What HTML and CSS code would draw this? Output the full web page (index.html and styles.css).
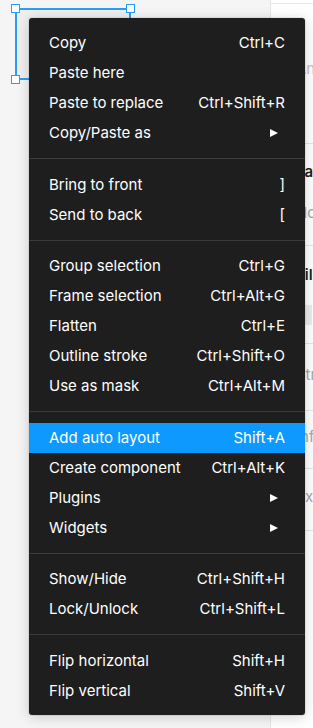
FILE: index.html
```html
<!DOCTYPE html>
<html lang="en">
<head>
    <meta charset="UTF-8">
    <meta name="viewport" content="width=device-width, initial-scale=1.0">
    <title>Context menu</title>
    <link rel="stylesheet" href="styles.css">
</head>
<body>

    <!-- Canvas with the selected frame -->
    <main class="canvas">
        <div class="selection">
            <span class="handle tl"></span>
            <span class="handle tr"></span>
            <span class="handle bl"></span>
        </div>

        <!-- Context menu -->
        <ul class="menu">
            <li class="item"><span>Copy</span><span class="key">Ctrl+C</span></li>
            <li class="item"><span>Paste here</span></li>
            <li class="item"><span>Paste to replace</span><span class="key">Ctrl+Shift+R</span></li>
            <li class="item"><span>Copy/Paste as</span><span class="arrow"></span></li>
            <li class="sep"></li>
            <li class="item"><span>Bring to front</span><span class="key">]</span></li>
            <li class="item"><span>Send to back</span><span class="key">[</span></li>
            <li class="sep"></li>
            <li class="item"><span>Group selection</span><span class="key">Ctrl+G</span></li>
            <li class="item"><span>Frame selection</span><span class="key">Ctrl+Alt+G</span></li>
            <li class="item"><span>Flatten</span><span class="key">Ctrl+E</span></li>
            <li class="item"><span>Outline stroke</span><span class="key">Ctrl+Shift+O</span></li>
            <li class="item"><span>Use as mask</span><span class="key">Ctrl+Alt+M</span></li>
            <li class="sep"></li>
            <li class="item active"><span>Add auto layout</span><span class="key">Shift+A</span></li>
            <li class="item"><span>Create component</span><span class="key">Ctrl+Alt+K</span></li>
            <li class="item"><span>Plugins</span><span class="arrow"></span></li>
            <li class="item"><span>Widgets</span><span class="arrow"></span></li>
            <li class="sep"></li>
            <li class="item"><span>Show/Hide</span><span class="key">Ctrl+Shift+H</span></li>
            <li class="item"><span>Lock/Unlock</span><span class="key">Ctrl+Shift+L</span></li>
            <li class="sep"></li>
            <li class="item"><span>Flip horizontal</span><span class="key">Shift+H</span></li>
            <li class="item"><span>Flip vertical</span><span class="key">Shift+V</span></li>
        </ul>
    </main>

    <!-- Properties panel (mostly hidden under the menu) -->
    <aside class="panel">
        <div class="panel-head"></div>
        <section class="sec sec-frame"><p class="muted">Any</p></section>
        <section class="sec sec-layer">
            <p class="title">Layer</p>
            <p class="muted gap">Normal</p>
        </section>
        <section class="sec sec-fill">
            <p class="title">Fill</p>
            <div class="swatch"></div>
        </section>
        <section class="sec sec-stroke"><p class="muted">Stroke</p></section>
        <section class="sec sec-effects"><p class="muted">Info</p></section>
        <section class="sec sec-export"><p class="muted">Export</p></section>
    </aside>

</body>
</html>
```

FILE: styles.css
```css
/* Reset */
* { margin: 0; padding: 0; box-sizing: border-box; }
html, body { height: 100%; }
body { display: flex; font-family: 'Inter', 'Noto Sans', sans-serif; font-size: 15px; background-color: #f5f5f5; overflow: hidden; }

/* Canvas */
.canvas { position: relative; width: 270px; flex-shrink: 0; height: 100%; background-color: #f5f5f5; }
.selection { position: absolute; left: 15px; top: 8px; width: 116px; height: 72px; border: 2px solid #2a9ef6; background-color: #efefef; }
.handle { position: absolute; width: 9px; height: 9px; background-color: #fff; border: 1px solid #2a9ef6; }
.handle.tl { left: -6px; top: -6px; }
.handle.tr { right: -6px; top: -6px; }
.handle.bl { left: -6px; bottom: -6px; }

/* Context menu */
.menu { position: absolute; left: 29px; top: 18px; width: 276px; padding: 10px 0 9px; list-style: none; background-color: #1e1e1e; border-radius: 3px; box-shadow: 0 2px 14px rgba(0, 0, 0, 0.18), 0 0 0 1px rgba(0, 0, 0, 0.06); color: #fff; z-index: 2; }
.item { display: flex; justify-content: space-between; align-items: center; height: 30px; padding: 0 20px; line-height: 30px; white-space: nowrap; }
.item.active { background-color: #0d99ff; }
.key { color: #fff; }
.arrow { width: 0; height: 0; margin-right: 7px; border-top: 4.5px solid transparent; border-bottom: 4.5px solid transparent; border-left: 8px solid #fff; }
.sep { height: 1px; margin: 10px 0 10.5px; background-color: #3a3a3a; }

/* Properties panel */
.panel { flex: 1; min-width: 0; height: 100%; background-color: #fff; border-left: 1px solid #e6e6e6; overflow: hidden; white-space: nowrap; }
.panel-head { height: 4px; border-bottom: 1px solid #e6e6e6; }
.sec { padding-left: 25px; border-bottom: 1px solid #e6e6e6; }
.sec p { line-height: 20px; }
.title { color: #222; font-weight: 600; }
.muted { color: #a6a6a6; }
.gap { margin-top: 21px; }
.sec-frame { height: 140px; padding-top: 55px; }
.sec-frame .muted { color: #c4c4c4; }
.sec-layer { height: 102px; padding-top: 18px; }
.sec-fill { height: 98px; padding-top: 19px; }
.sec-stroke { height: 67px; padding-top: 21px; }
.sec-effects { height: 58px; padding-top: 16px; }
.sec-export { height: 62px; padding-top: 18px; }
.swatch { width: 16px; height: 20px; margin-top: 20px; background-color: #ececec; }
```
